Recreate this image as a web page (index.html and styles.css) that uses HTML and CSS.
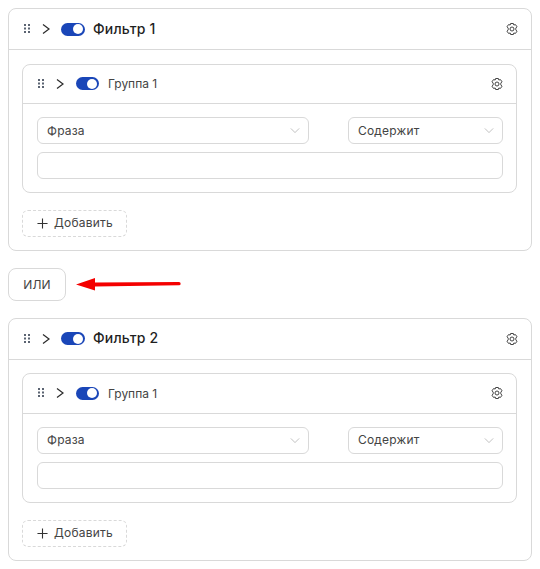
FILE: index.html
```html
<!DOCTYPE html>
<html>
<head>
    <title>Фильтры</title>
    <link rel="stylesheet" href="styles.css">
</head>
<body>
    <svg class="icon-defs" width="0" height="0">
        <symbol id="drag" viewBox="0 0 8 10"><g fill="#5b6472"><rect x="1" y="0" width="2" height="2"/><rect x="5" y="0" width="2" height="2"/><rect x="1" y="3.500" width="2" height="2"/><rect x="5" y="3.500" width="2" height="2"/><rect x="1" y="7" width="2" height="2"/><rect x="5" y="7" width="2" height="2"/></g></symbol>
        <symbol id="chevron" viewBox="0 0 10 12"><path d="M2 1.500 8 6 2 10.500" fill="none" stroke="#2b2b2b" stroke-width="1.200"/></symbol>
        <symbol id="gear" viewBox="0 0 14 14"><g fill="none" stroke="#444" stroke-width="1"><path d="M5.600 1.500h2.800l.4 1.500 1.700-.4 1.500 2.200-1.200 1.300v1.800l1.200 1.300-1.500 2.200-1.700-.4-.4 1.500H5.600l-.4-1.500-1.700.4L2 9.200l1.200-1.300V6.100L2 4.800l1.500-2.200 1.700.4z"/><circle cx="7" cy="7" r="2"/></g></symbol>
        <symbol id="down" viewBox="0 0 12 8"><path d="M1 1.500 6 6.500 11 1.500" fill="none" stroke="#b5b5b5" stroke-width="1"/></symbol>
        <symbol id="plus" viewBox="0 0 12 12"><path d="M6 0.500V11.500M0.500 6H11.500" fill="none" stroke="#333" stroke-width="1.200"/></symbol>
    </svg>

    <section class="card">
        <header class="card-head">
            <svg class="drag"><use href="#drag"/></svg>
            <svg class="chevron"><use href="#chevron"/></svg>
            <span class="toggle"><span class="knob"></span></span>
            <h2 class="card-title">Фильтр 1</h2>
            <svg class="gear"><use href="#gear"/></svg>
        </header>
        <div class="card-body">
            <section class="group">
                <header class="group-head">
                    <svg class="drag"><use href="#drag"/></svg>
                    <svg class="chevron"><use href="#chevron"/></svg>
                    <span class="toggle"><span class="knob"></span></span>
                    <span class="group-title">Группа 1</span>
                    <svg class="gear"><use href="#gear"/></svg>
                </header>
                <div class="group-body">
                    <div class="selects">
                        <div class="select select-wide"><span class="label">Фраза</span><svg class="down"><use href="#down"/></svg></div>
                        <div class="select select-narrow"><span class="label">Содержит</span><svg class="down"><use href="#down"/></svg></div>
                    </div>
                    <div class="text-input"></div>
                </div>
            </section>
            <button class="add-btn"><svg class="plus"><use href="#plus"/></svg><span class="label">Добавить</span></button>
        </div>
    </section>

    <div class="or-row">
        <button class="or-btn"><span class="label">ИЛИ</span></button>
        <svg class="arrow" width="107" height="14" viewBox="0 0 107 14"><path d="M1 7.500 20 1V5.500L104 5a1.500 1.500 0 0 1 0 3.300L20 9.500V13.500Z" fill="#f40000"/></svg>
    </div>

    <section class="card">
        <header class="card-head">
            <svg class="drag"><use href="#drag"/></svg>
            <svg class="chevron"><use href="#chevron"/></svg>
            <span class="toggle"><span class="knob"></span></span>
            <h2 class="card-title">Фильтр 2</h2>
            <svg class="gear"><use href="#gear"/></svg>
        </header>
        <div class="card-body">
            <section class="group">
                <header class="group-head">
                    <svg class="drag"><use href="#drag"/></svg>
                    <svg class="chevron"><use href="#chevron"/></svg>
                    <span class="toggle"><span class="knob"></span></span>
                    <span class="group-title">Группа 1</span>
                    <svg class="gear"><use href="#gear"/></svg>
                </header>
                <div class="group-body">
                    <div class="selects">
                        <div class="select select-wide"><span class="label">Фраза</span><svg class="down"><use href="#down"/></svg></div>
                        <div class="select select-narrow"><span class="label">Содержит</span><svg class="down"><use href="#down"/></svg></div>
                    </div>
                    <div class="text-input"></div>
                </div>
            </section>
            <button class="add-btn"><svg class="plus"><use href="#plus"/></svg><span class="label">Добавить</span></button>
        </div>
    </section>
</body>
</html>
```

FILE: styles.css
```css
* { box-sizing: border-box; }
html, body { overflow: hidden; }
body { margin: 8px; background: #fff; color: #333; font-family: "Inter", "Noto Sans", sans-serif; font-size: 12px; }
.icon-defs { position: absolute; }

.card { width: 524px; height: 243px; border: 1px solid #d9d9d9; border-radius: 8px; }
.card-head { display: flex; align-items: center; height: 41px; padding: 0 12px 0 14px; border-bottom: 1px solid #d9d9d9; }
.card-title { flex: 1; margin: 0 0 2px; color: #1f1f1f; font-size: 14px; font-weight: 500; letter-spacing: 0.2px; }
.card-body { padding: 13.6px 13px 0; }

.group { width: 495px; height: 129.5px; border: 1px solid #d9d9d9; border-radius: 8px; }
.group-head { display: flex; align-items: center; height: 39.5px; padding: 0 12px 0 14px; border-bottom: 1px solid #d9d9d9; }
.group-title { flex: 1; color: #444; font-size: 12px; }
.group-head .chevron { margin-right: 11px; }
.group-head .toggle { width: 23px; margin-right: 9px; }
.group-body { padding: 13px 13px 0 14px; }

.drag { width: 8px; height: 10px; margin-right: 10px; }
.chevron { width: 10px; height: 12px; margin-right: 10px; }
.toggle { display: flex; align-items: center; justify-content: flex-end; width: 24px; height: 13px; margin-right: 8px; padding-right: 2px; border-radius: 7px; background: #1a46b8; }
.knob { width: 10px; height: 10px; border-radius: 50%; background: #fff; }
.gear { width: 14px; height: 14px; }

.label { display: inline-block; margin-bottom: 1px; letter-spacing: 0.2px; }
.selects { display: flex; justify-content: space-between; margin-bottom: 8px; }
.select { display: flex; align-items: center; justify-content: space-between; height: 27px; padding: 0 8px 0 9px; border: 1px solid #d9d9d9; border-radius: 6px; color: #444; }
.select-wide { width: 272px; }
.select-narrow { width: 155px; }
.down { width: 10px; height: 7px; }
.text-input { height: 27px; border: 1px solid #d9d9d9; border-radius: 6px; }

.add-btn { display: flex; align-items: center; gap: 6px; width: 105px; height: 27px; margin-top: 16.9px; padding: 0 0 0 14px; border: 1px dashed #d9d9d9; border-radius: 6px; background: #fff; color: #444; font: inherit; }
.plus { width: 11px; height: 11px; }

.or-row { position: relative; height: 33px; margin: 17px 0 16.6px; }
.or-btn { width: 58px; height: 33px; padding: 0; border: 1px solid #d9d9d9; border-radius: 8px; background: #fff; color: #444; font: inherit; }
.arrow { position: absolute; left: 67px; top: 9px; }
```
